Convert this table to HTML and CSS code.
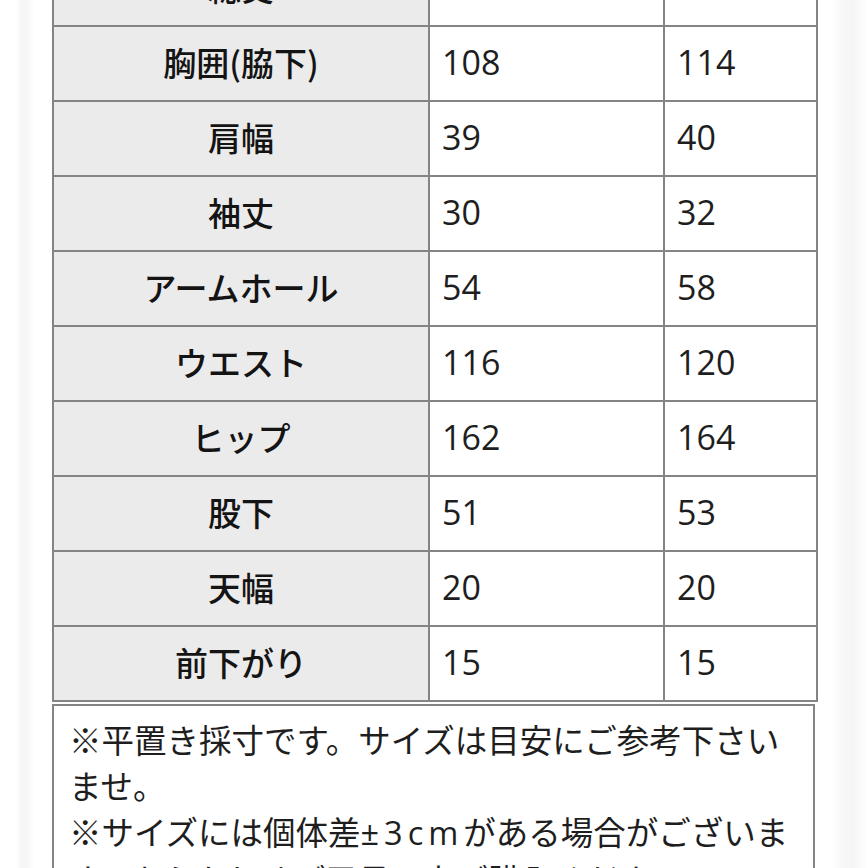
FILE: index.html
```html
<!DOCTYPE html>
<html lang="ja">
<head>
<meta charset="utf-8">
<link rel="stylesheet" href="styles.css">
</head>
<body>
<div class="page">
  <table class="size-table">
    <colgroup>
      <col class="c-label">
      <col class="c-a">
      <col class="c-b">
    </colgroup>
    <tbody>
      <tr><th>総丈</th><td>100</td><td>103</td></tr>
      <tr><th>胸囲(脇下)</th><td>108</td><td>114</td></tr>
      <tr><th>肩幅</th><td>39</td><td>40</td></tr>
      <tr><th>袖丈</th><td>30</td><td>32</td></tr>
      <tr><th>アームホール</th><td>54</td><td>58</td></tr>
      <tr><th>ウエスト</th><td>116</td><td>120</td></tr>
      <tr><th>ヒップ</th><td>162</td><td>164</td></tr>
      <tr><th>股下</th><td>51</td><td>53</td></tr>
      <tr><th>天幅</th><td>20</td><td>20</td></tr>
      <tr><th>前下がり</th><td>15</td><td>15</td></tr>
    </tbody>
  </table>
  <div class="note">
    <p>※平置き採寸です。サイズは目安にご参考下さいませ。</p>
    <p>※サイズには個体差<span class="latin">±3cm</span>がある場合がございます。あらかじめご了承の上ご購入ください。</p>
  </div>
</div>
</body>
</html>
```
FILE: styles.css
```css
html, body {
  margin: 0;
  padding: 0;
}
body {
  width: 868px;
  height: 868px;
  overflow: hidden;
  background:
    linear-gradient(to right,
      #ffffff 0px, #ffffff 16px, #f5f5f5 22px, #f7f7f7 28px, #ffffff 34px,
      #ffffff 832px, #f8f8f8 842px, #f5f5f5 852px, #fbfbfb 862px, #ffffff 868px);
  font-family: "Noto Sans CJK JP", "Noto Sans", sans-serif;
  color: #1a1a1a;
}
.page {
  margin-top: -50px;
  padding-left: 52px;
}
.size-table {
  border-collapse: collapse;
  table-layout: fixed;
  width: 764px;
  background: #fff;
}
.c-label { width: 376px; }
.c-a { width: 235px; }
.c-b { width: 153px; }
.size-table tr {
  height: 75px;
}
.size-table th,
.size-table td {
  border: 2px solid #848484;
  padding: 0 0 4px 0;
  vertical-align: middle;
}
.size-table th {
  background: #ebebeb;
  font-weight: 500;
  font-size: 33px;
  text-align: center;
  color: #141414;
}
.size-table td {
  font-family: "Open Sans", "Noto Sans", sans-serif;
  font-size: 34px;
  font-weight: 400;
  text-align: left;
  padding-left: 12px;
  color: #1e1e1e;
}
.note {
  margin-top: 2px;
  width: 740px;
  border: 2px solid #848484;
  border-bottom: none;
  padding: 10px 4px 40px 15px;
  background: #fff;
  font-size: 32.5px;
  line-height: 46px;
  color: #1e1e1e;
}
.note p {
  margin: 0;
}
.latin {
  font-family: "Open Sans", "Noto Sans", sans-serif;
  letter-spacing: 5px;
}
```
